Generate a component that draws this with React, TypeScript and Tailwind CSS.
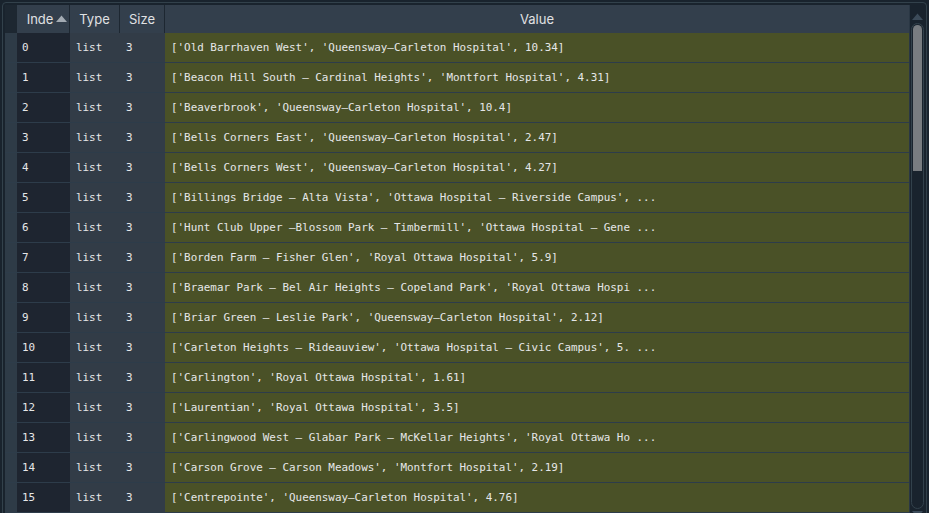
import React from "react";

const rows: string[] = [
  "['Old Barrhaven West', 'Queensway–Carleton Hospital', 10.34]",
  "['Beacon Hill South – Cardinal Heights', 'Montfort Hospital', 4.31]",
  "['Beaverbrook', 'Queensway–Carleton Hospital', 10.4]",
  "['Bells Corners East', 'Queensway–Carleton Hospital', 2.47]",
  "['Bells Corners West', 'Queensway–Carleton Hospital', 4.27]",
  "['Billings Bridge – Alta Vista', 'Ottawa Hospital – Riverside Campus', ...",
  "['Hunt Club Upper –Blossom Park – Timbermill', 'Ottawa Hospital – Gene ...",
  "['Borden Farm – Fisher Glen', 'Royal Ottawa Hospital', 5.9]",
  "['Braemar Park – Bel Air Heights – Copeland Park', 'Royal Ottawa Hospi ...",
  "['Briar Green – Leslie Park', 'Queensway–Carleton Hospital', 2.12]",
  "['Carleton Heights – Rideauview', 'Ottawa Hospital – Civic Campus', 5. ...",
  "['Carlington', 'Royal Ottawa Hospital', 1.61]",
  "['Laurentian', 'Royal Ottawa Hospital', 3.5]",
  "['Carlingwood West – Glabar Park – McKellar Heights', 'Royal Ottawa Ho ...",
  "['Carson Grove – Carson Meadows', 'Montfort Hospital', 2.19]",
  "['Centrepointe', 'Queensway–Carleton Hospital', 4.76]",
];

const mono = { fontFamily: '"DejaVu Sans Mono", "Liberation Mono", monospace' };
const sans = { fontFamily: 'Inter, "Noto Sans", sans-serif' };

export default function App() {
  return (
    <div className="w-[929px] h-[513px] bg-[#19232d] p-[2px] overflow-hidden">
      <div className="h-[520px] border border-[#32414b] rounded-[4px] flex p-[2px]">
        <div className="w-[904px] flex flex-col overflow-hidden">
          {/* header */}
          <div className="flex h-[28px] shrink-0 bg-[#333f4c] text-[13px] text-[#e0e1e3]" style={sans}>
            <div className="w-[12px] bg-[#1d2731]" />
            <div className="w-[53px] flex items-center justify-center gap-[3px] border-r border-[#1d2731] overflow-hidden pt-[1px]">
              <span className="ml-[8px]">Inde</span>
              <svg width="11" height="7" viewBox="0 0 11 7" className="mt-[-2px]">
                <polygon points="0,7 5.5,0.5 11,7" fill="#a3abb3" />
              </svg>
            </div>
            <div className="w-[50px] flex items-center justify-center border-r border-[#1d2731] pt-[1px]">Type</div>
            <div className="w-[45px] flex items-center justify-center border-r border-[#1d2731] pt-[1px]">Size</div>
            <div className="flex-1 flex items-center justify-center pt-[1px]">Value</div>
          </div>
          {rows.map((v, i) => (
            <div key={i} className="flex h-[30px] shrink-0 border-b border-[#2d3c4a] text-[10.9px] text-[#e6e7e8]" style={mono}>
              <div className="w-[12px] bg-[#2e3b47]" />
              <div className="w-[53px] bg-[#1e2530] flex items-center pl-[5px] pt-[2px]">{i}</div>
              <div className="w-[50px] bg-[#323c47] flex items-center pl-[6px] pt-[2px]">list</div>
              <div className="w-[45px] bg-[#323c47] flex items-center pl-[6px] pt-[2px]">3</div>
              <div className="flex-1 bg-[#4a5127] flex items-center pl-[6px] pt-[2px] whitespace-pre overflow-hidden">{v}</div>
            </div>
          ))}
        </div>
        <div className="flex-1 flex flex-col items-center border-l border-[#2a3744] bg-[#19232d]">
          <svg width="11" height="7" viewBox="0 0 11 7" className="mt-[8px] shrink-0">
            <polygon points="0,7 5.5,0.5 11,7" fill="#3c4b59" />
          </svg>
          <div className="mt-[3px] w-[13px] h-[486px] rounded-full border border-[#32414b] p-[1px] shrink-0">
            <div className="w-full h-[146px] bg-[#787c80] rounded-t-full" />
          </div>
          <svg width="11" height="7" viewBox="0 0 11 7" className="mt-[2px] shrink-0">
            <polygon points="0,0 5.5,6.5 11,0" fill="#3c4b59" />
          </svg>
        </div>
      </div>
    </div>
  );
}
